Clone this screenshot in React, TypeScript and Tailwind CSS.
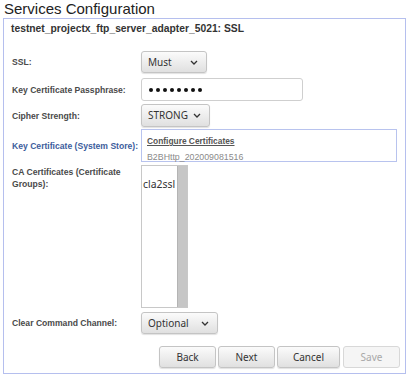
import React from "react";

const Chevron = () => (
    <svg width="8" height="5" viewBox="0 0 8 5" className="shrink-0">
        <path d="M1 1 L4 4 L7 1" fill="none" stroke="#333" strokeWidth="1.3" />
    </svg>
);

const Select = ({ value, w }: { value: string; w: string }) => (
    <div
        className={`${w} h-full flex items-center justify-between pl-[6px] pr-[8px] rounded-[3px] border border-[#c4c4c4] bg-gradient-to-b from-[#fbfbfb] to-[#e0e0e0] shadow-[0_1px_1px_rgba(0,0,0,0.12)] text-[10px] text-[#333] font-['Noto_Sans',sans-serif]`}
    >
        <span>{value}</span>
        <Chevron />
    </div>
);

const Button = ({ label, w, disabled }: { label: string; w: string; disabled?: boolean }) => (
    <div
        className={`${w} h-[22px] flex items-center justify-center rounded-[3px] border text-[10px] font-['Noto_Sans',sans-serif] ${
            disabled
                ? "border-[#d8d8d8] bg-[#f5f5f5] text-[#a8a8a8]"
                : "border-[#c4c4c4] bg-gradient-to-b from-[#fbfbfb] to-[#e0e0e0] text-[#333] shadow-[0_1px_1px_rgba(0,0,0,0.12)]"
        }`}
    >
        {label}
    </div>
);

const Label = ({ children, blue }: { children: React.ReactNode; blue?: boolean }) => (
    <div className={`w-[137px] pl-[8px] text-[8.6px] font-bold leading-[12px] whitespace-nowrap ${blue ? "text-[#3d5d9c]" : "text-[#4a4a4a]"}`}>
        {children}
    </div>
);

export default function App() {
    return (
        <div className="w-[410px] h-[379px] bg-white overflow-hidden font-['Liberation_Sans',Arial,sans-serif]">
            <div className="pl-[4px] h-[18px] text-[15px] leading-[18px] text-[#222]">Services Configuration</div>

            <div className="ml-[3px] w-[403px] h-[356px] border border-[#b5bfee]">
                <div className="pl-[7px] mt-[1px] h-[18px] leading-[18px] text-[10.3px] font-bold text-[#333]">
                    testnet_projectx_ftp_server_adapter_5021: SSL
                </div>

                <div className="mt-[13px] flex flex-col">
                    <div className="flex items-center h-[22px]">
                        <Label>SSL:</Label>
                        <Select value="Must" w="w-[66px]" />
                    </div>

                    <div className="flex items-center h-[23px] mt-[5px]">
                        <Label>Key Certificate Passphrase:</Label>
                        <div className="w-[162px] h-full flex items-center gap-[3px] pl-[7px] rounded-[3px] border border-[#cfcfcf] bg-white">
                            {Array.from({ length: 8 }).map((_, i) => (
                                <span key={i} className="w-[4px] h-[4px] rounded-full bg-[#111]" />
                            ))}
                        </div>
                    </div>

                    <div className="flex items-center h-[23px] mt-[3px]">
                        <Label>Cipher Strength:</Label>
                        <Select value="STRONG" w="w-[69px]" />
                    </div>

                    <div className="flex items-center h-[33px] mt-[2px]">
                        <Label blue>Key Certificate (System Store):</Label>
                        <div className="w-[256px] h-full border border-[#b8c3ee] pl-[5px] pt-[6px]">
                            <div className="text-[8.4px] leading-[10px] font-bold text-[#555] underline">Configure Certificates</div>
                            <div className="mt-[6px] text-[8.8px] leading-[10px] text-[#8a8a8a]">B2BHttp_202009081516</div>
                        </div>
                    </div>

                    <div className="flex items-start h-[143px] mt-[3px]">
                        <div className="pt-[1px]">
                            <Label>
                                CA Certificates (Certificate
                                <br />
                                Groups):
                            </Label>
                        </div>
                        <div className="w-[47px] h-full flex border border-[#c8c8c8] bg-white">
                            <div className="flex-1 pl-[1px] pt-[12px] text-[10.4px] leading-[12px] text-[#333] font-['Noto_Sans',sans-serif]">cla2ssl</div>
                            <div className="w-[10px] h-full bg-[#c6c6c6] border-l border-[#b4b4b4]" />
                        </div>
                    </div>

                    <div className="flex items-center h-[22px] mt-[4px]">
                        <Label>Clear Command Channel:</Label>
                        <Select value="Optional" w="w-[77px]" />
                    </div>

                    <div className="flex justify-end gap-[2px] mt-[12px] pr-[5px]">
                        <Button label="Back" w="w-[57px]" />
                        <Button label="Next" w="w-[57px]" />
                        <Button label="Cancel" w="w-[63px]" />
                        <div className="ml-[1px]">
                            <Button label="Save" w="w-[57px]" disabled />
                        </div>
                    </div>
                </div>
            </div>
        </div>
    );
}
